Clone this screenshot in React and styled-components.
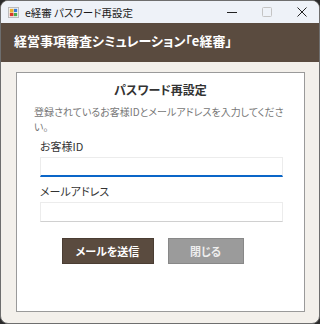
import styled, { createGlobalStyle } from "styled-components";

const GlobalStyle = createGlobalStyle`
  html, body {
    margin: 0;
    padding: 0;
    background: #2b2b2b;
  }
  body {
    font-family: "Noto Sans CJK JP", "Noto Sans", sans-serif;
    font-feature-settings: "palt";
  }
`;

export default function App() {
  return (
    <>
      <GlobalStyle />
      <Window>
        <TitleBar>
          <AppIcon viewBox="0 0 12 12">
            <rect x="0.5" y="0.5" width="11" height="11" fill="#f4f4f4" stroke="#b8b8b8" />
            <rect x="2" y="2" width="4" height="4" fill="#e8b030" />
            <rect x="6.5" y="2" width="3.5" height="3.5" fill="#3a7bd5" />
            <rect x="2" y="6.5" width="4" height="3.5" fill="#d83a2a" />
            <rect x="6.5" y="6.5" width="3.5" height="3.5" fill="#4aa84a" />
          </AppIcon>
          <TitleText>e経審 パスワード再設定</TitleText>
          <Controls>
            <Ctrl>
              <svg width="10" height="10" viewBox="0 0 10 10">
                <path d="M0 5.5h10" stroke="#222" strokeWidth="1" />
              </svg>
            </Ctrl>
            <Ctrl>
              <svg width="10" height="10" viewBox="0 0 10 10">
                <rect x="0.5" y="0.5" width="9" height="9" rx="1" fill="none" stroke="#c4c4c4" />
              </svg>
            </Ctrl>
            <Ctrl>
              <svg width="10" height="10" viewBox="0 0 10 10">
                <path d="M0.5 0.5l9 9M9.5 0.5l-9 9" stroke="#222" strokeWidth="1" />
              </svg>
            </Ctrl>
          </Controls>
        </TitleBar>
        <Header>経営事項審査シミュレーション「e経審」</Header>
        <Body>
          <Panel>
            <PanelTitle>パスワード再設定</PanelTitle>
            <Desc>
              登録されているお客様IDとメールアドレスを入力してくださ
              <br />
              い。
            </Desc>
            <Field>
              <Label>お客様ID</Label>
              <Input focused autoFocus />
            </Field>
            <Field gap={7}>
              <Label>メールアドレス</Label>
              <Input />
            </Field>
            <Buttons>
              <Button primary>メールを送信</Button>
              <Button>閉じる</Button>
            </Buttons>
          </Panel>
        </Body>
      </Window>
    </>
  );
}

const Window = styled.div`
  width: 320px;
  height: 324px;
  box-sizing: border-box;
  border: 1px solid #6e6e6e;
  border-radius: 8px;
  overflow: hidden;
  display: flex;
  flex-direction: column;
  background: #f3f0eb;
`;

const TitleBar = styled.div`
  height: 22px;
  flex: none;
  display: flex;
  align-items: center;
  background: #eef2f8;
  padding-left: 7px;
`;

const AppIcon = styled.svg`
  width: 11px;
  height: 11px;
  margin-right: 6px;
`;

const TitleText = styled.div`
  font-size: 10.5px;
  color: #1a1a1a;
  flex: 1;
`;

const Controls = styled.div`
  display: flex;
  height: 100%;
`;

const Ctrl = styled.div`
  width: 35px;
  height: 100%;
  display: flex;
  align-items: center;
  justify-content: center;
`;

const Header = styled.div`
  height: 39px;
  box-sizing: border-box;
  flex: none;
  background: #5a4b3f;
  color: #fff;
  font-weight: bold;
  font-size: 13px;
  line-height: 18px;
  display: flex;
  align-items: center;
  padding: 0 0 4px 13px;
`;

const Body = styled.div`
  flex: 1;
  padding: 10px 14px 11px 15px;
  display: flex;
`;

const Panel = styled.div`
  flex: 1;
  background: #fff;
  border: 1px solid #9a9a9a;
  display: flex;
  flex-direction: column;
  padding: 8px 17px 0 17px;
`;

const PanelTitle = styled.div`
  text-align: center;
  font-size: 12px;
  font-weight: bold;
  color: #333;
  line-height: 18px;
`;

const Desc = styled.div`
  font-size: 10px;
  color: #777;
  line-height: 15px;
  margin-top: 5px;
  white-space: nowrap;
`;

const Field = styled.div`
  display: flex;
  flex-direction: column;
  margin: ${p => p.gap ?? 5}px 4px 0 6px;
`;

const Label = styled.div`
  font-size: 11px;
  color: #333;
  line-height: 15px;
  margin-bottom: 3px;
`;

const Input = styled.input`
  height: 20px;
  box-sizing: border-box;
  border: 1px solid #ececec;
  border-bottom: ${p => (p.focused ? "2px solid #0a66c8" : "1px solid #d0d0d0")};
  outline: none;
  padding: 0 2px;
  font-size: 12px;
  background: #fff;
  caret-color: #444;
`;

const Buttons = styled.div`
  display: flex;
  justify-content: center;
  gap: 14px;
  margin-top: 16px;
  padding-right: 16px;
`;

const Button = styled.button`
  height: 26px;
  width: ${p => (p.primary ? "92px" : "76px")};
  background: ${p => (p.primary ? "#5a4b3f" : "#9b9b9b")};
  border: 1px solid ${p => (p.primary ? "#4a3d33" : "#888")};
  color: ${p => (p.primary ? "#fff" : "#eee")};
  font-family: "Noto Sans CJK JP", sans-serif;
  font-feature-settings: "palt";
  font-weight: bold;
  font-size: 11px;
  padding: 0;
`;
